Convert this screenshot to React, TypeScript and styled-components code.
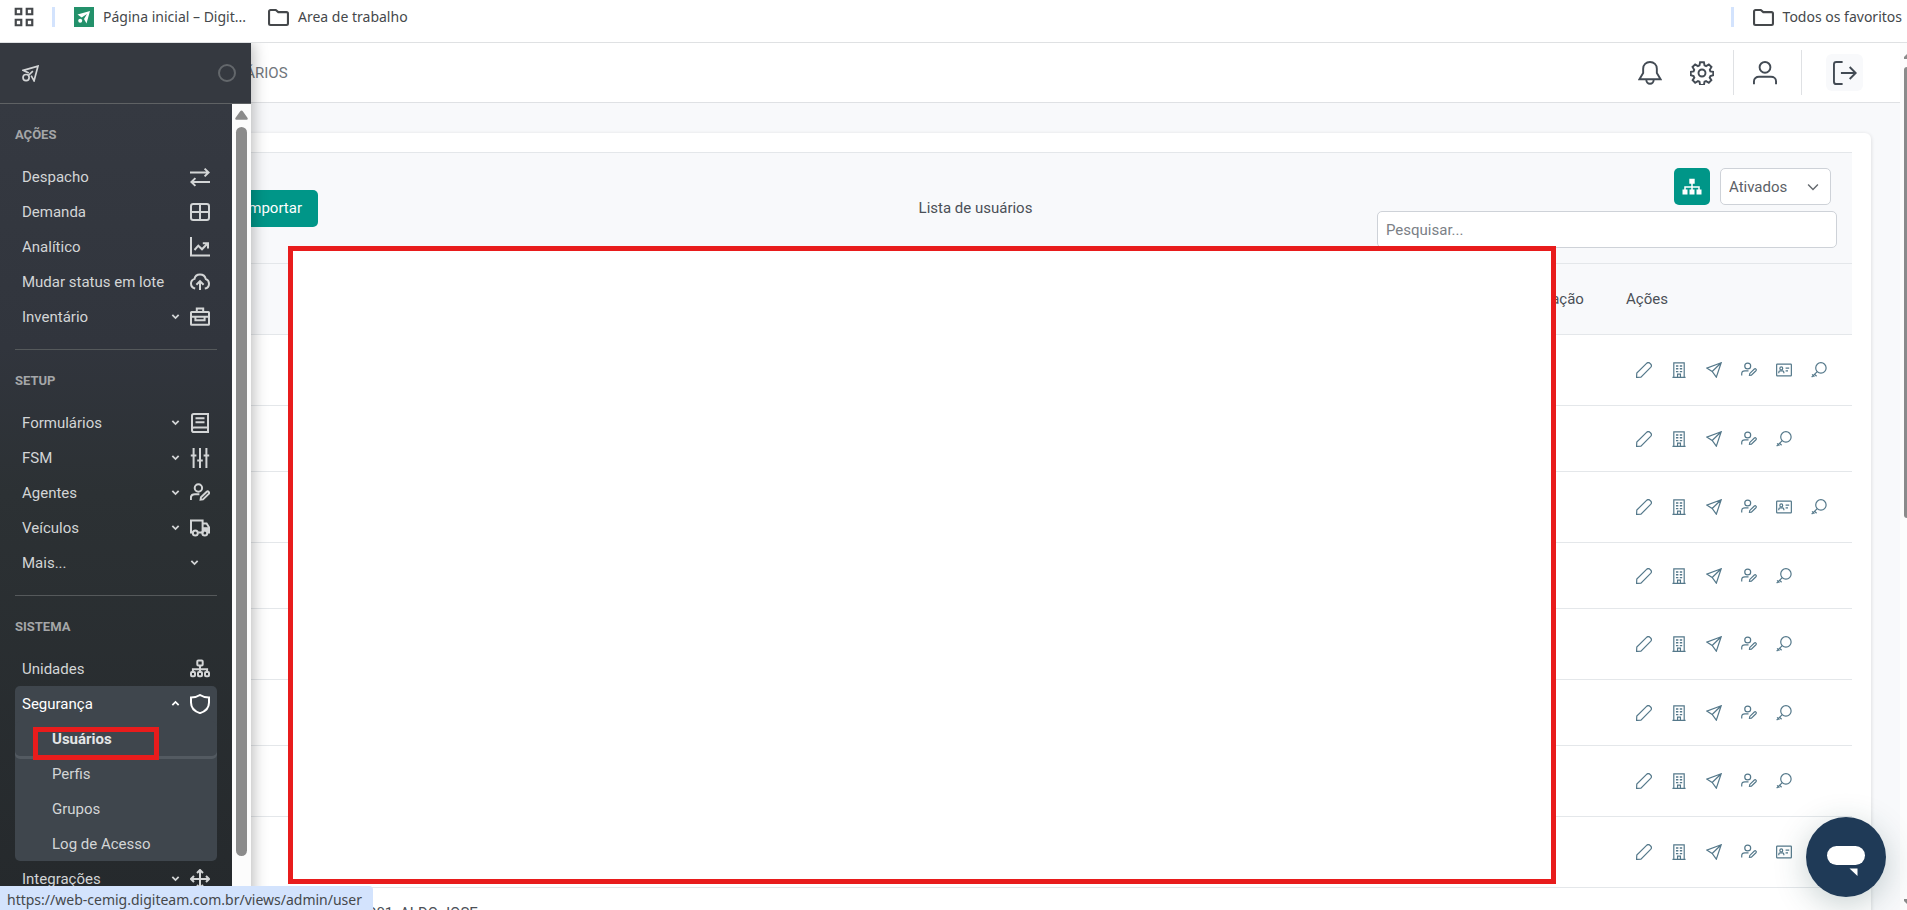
import React from 'react';
import styled, { createGlobalStyle, css } from 'styled-components';

const GlobalStyle = createGlobalStyle`
  *, *::before, *::after { box-sizing: border-box; }
  body {
    margin: 0;
    overflow: hidden;
    background: #fff;
    color: #4b5057;
    font: 15px/22px Roboto, "Liberation Sans", sans-serif;
  }
  button, input, select { font: inherit; color: inherit; }
  button { border: 0; padding: 0; background: none; cursor: pointer; }
  a { color: inherit; text-decoration: none; }
  ul { list-style: none; margin: 0; padding: 0; }
`;

/* ---------- icons ---------- */

const Svg = styled.svg<{ $size: number; $stroke: number }>`
  display: block;
  flex: none;
  width: ${p => p.$size}px;
  height: ${p => p.$size}px;
  fill: none;
  stroke: currentColor;
  stroke-width: ${p => p.$stroke};
`;

const shapes = {
  transfer: <path d="M0 5.500h18.500M14.600 1.600l4 3.900-4 3.900M20 15H1.500M5.400 11.100l-4 3.900 4 3.900" />,
  grid: <><rect x="1" y="2" width="18" height="16" rx="2.200" /><path d="M10 2v16M1 10h18" /></>,
  chart: <path d="M1 0v18.600H20M4.500 13l3.800-4.300 3.700 3.600 5.300-5.500M12.800 6.200h5.200v5.200" />,
  cloud: <path d="M5.200 16.500C2.600 16 1 14.200 1 11.600c0-2.300 1.400-4 3.500-4.700C5 4 7.300 2.400 10 2.400c2.900 0 5.200 1.900 5.800 4.700 2 .7 3.200 2.400 3.200 4.600 0 2.600-1.600 4.400-4.200 4.800M10 18V9.500M6.400 12.700L10 9.100l3.600 3.600" />,
  briefcase: <><rect x="1" y="5" width="18" height="12.800" rx="0.600" /><path d="M6.800 5V1.600h6.400V5M1 9.800h18M5.400 9.800v3.500h9.200V9.800" /></>,
  book: <path d="M18 14.600V1H3.800C2.800 1 2 1.800 2 2.800v14.400c0 1 .8 1.800 1.800 1.800H18v-4.400H3.800C2.800 14.600 2 15.400 2 16.400M5.500 5.200h9M5.500 9.200h9" />,
  equalizer: <path d="M3.600 0v20M10 0v20M16.400 0v20M0.800 7.500h5.600M7.200 12.500h5.600M13.600 7.500h5.600" />,
  userEdit: <><circle cx="8.400" cy="5" r="3.700" /><path d="M0.900 17v-2.200C0.900 12.600 2.700 11.200 4.900 11.200h4.500" /><path d="M10.600 16.700l.4-2.400 5.700-5.500c1.400-1.100 3.200.7 2 2.100l-5.700 5.500z" /></>,
  truck: <><path d="M2.500 14.600H1V2.400h11.600v12.200H8.200M12.600 5.400h4l2.400 3.800v5.400h-1.200" /><path d="M13 9.200h6v4h-6z" fill="currentColor" stroke="none" /><circle cx="5.300" cy="15" r="2.500" /><circle cx="14.800" cy="15" r="2.500" /></>,
  sitemap: <><rect x="7.300" y="1.600" width="5.400" height="5" rx="1" /><rect x="1" y="13" width="4" height="4.200" rx="1" /><rect x="8" y="13" width="4" height="4.200" rx="1" /><rect x="15" y="13" width="4" height="4.200" rx="1" /><path d="M10 6.600V13M2.900 13v-2.800h14.200V13" /></>,
  shield: <path d="M10 1c3 2 5.700 2.600 9 2.600v4.900c0 5.100-3.700 9-9 10.600C4.700 17.500 1 13.600 1 8.500V3.600C4.300 3.600 7 3 10 1z" />,
  move: <path d="M10 1v18M1 10h18M7 4l3-3 3 3M7 16l3 3 3-3M4 7l-3 3 3 3M16 7l3 3-3 3" />,
  pencil: <path d="M.7 19.300l.3-5.500L13.200 1.700c1.300-1.200 3.100-1.200 4.300 0l.8.800c1.200 1.200 1.200 3 0 4.300L6.200 18.900z" />,
  building: <><path d="M3.500 19V1h13v18M1.800 19.300h16.400M8.200 19v-3.800h3.600V19" /><path d="M6.200 5h3M11 5h3M6.200 8.500h3M11 8.500h3M6.200 12h3M11 12h3" strokeWidth="1.800" /></>,
  plane: <path d="M19 .9L.9 7.600l6.800 4.300L12.900 19zM19 .9L7.700 11.900" />,
  badge: <><rect x="0.800" y="2.600" width="18.400" height="14.800" rx="0.800" /><circle cx="6.600" cy="8" r="1.800" /><path d="M3.500 14v-1.200c0-1 .8-1.700 1.700-1.700H8c1 0 1.800.7 1.800 1.700V14M12 7.600h4.500M12 11h3" /></>,
  key: <><circle cx="12.400" cy="7.400" r="6.500" /><path d="M7.800 12L.8 19M1.400 15.400l2.900 2.900M4.400 15.200l2.600 2.600" /></>,
  bell: <path d="M10 .8c3.300 0 5.700 2.400 5.700 5.600v3.500l3.100 5.300H1.200l3.100-5.300V6.400C4.300 3.200 6.700.8 10 .8zM6.900 15.500c0 2 1.300 3.500 3.100 3.500s3.100-1.500 3.100-3.500" />,
  gear: <><circle cx="10" cy="10" r="2.900" /><path d="M8.400 1h3.200l.5 2.600 1.300.6 2.300-1.400 2.200 2.200-1.400 2.300.5 1.300 2.400.5v2.800l-2.400.6-.6 1.300 1.400 2.200-2.100 2.100-2.300-1.300-1.300.5-.5 2.600H8.400l-.5-2.600-1.300-.5-2.300 1.300-2.100-2.100 1.400-2.200-.6-1.300L.6 11.900V9.100L3 8.600l.5-1.300-1.400-2.300 2.200-2.200 2.300 1.400 1.300-.6z" /></>,
  user: <><circle cx="10" cy="5.300" r="4.500" /><path d="M.8 19.400v-2.600c0-2.300 1.900-3.700 4.200-3.700h10c2.300 0 4.200 1.400 4.200 3.700v2.600" /></>,
  logout: <path d="M8 .8H2.800c-1.100 0-2 .9-2 2v14.400c0 1.100.9 2 2 2H8M6.600 10h12.200M13.900 5l5 5-5 5" />,
  folder: <path d="M1 4.300v11.400c0 .8.600 1.400 1.400 1.400h15.200c.8 0 1.400-.6 1.400-1.400V6.300c0-.8-.6-1.400-1.400-1.400H9.800L7.400 2.900h-5C1.600 2.900 1 3.500 1 4.300z" />,
  apps: <path d="M2.500 2.500h5v5h-5zM12.500 2.500h5v5h-5zM2.500 12.500h5v5h-5zM12.500 12.500h5v5h-5z" />,
  down: <path d="M3 6.500l7 7 7-7" />,
  up: <path d="M3 13.500l7-7 7 7" />,
  logo: <><path d="M8 9.500L1.400 6.300 18.800 1.300 14.200 18.600 10.800 12.500" /><circle cx="4.800" cy="14.800" r="3.600" /><path d="M12.800 7.300l-5 4.700" /></>,
};
type IconName = keyof typeof shapes;

const Icon = ({ name, size = 20, stroke = 2 }: { name: IconName; size?: number; stroke?: number }) => (
  <Svg $size={size} $stroke={stroke} viewBox="0 0 20 20" aria-hidden="true">{shapes[name]}</Svg>
);

/* ---------- browser chrome ---------- */

const Page = styled.div`
  display: flex;
  flex-direction: column;
  height: 100vh;
`;

const BookmarkBar = styled.nav`
  display: flex;
  align-items: flex-start;
  flex: none;
  height: 43px;
  padding: 3px 5px 0 13px;
  border-bottom: 1px solid #dfe1e3;
  color: #45484b;
  font: 14px/28px "Noto Sans", sans-serif;
`;

const Bookmark = styled.a<{ $gap?: number }>`
  display: flex;
  align-items: center;
  height: 28px;
  gap: 9px;
  margin-right: ${p => p.$gap ?? 0}px;
`;

const BarDivider = styled.span<{ $push?: boolean }>`
  width: 3px;
  height: 20px;
  margin: 4px 19px 0 17px;
  background: #d3e3fd;
  ${p => p.$push && css`margin-left: auto;`}
`;

const StatusBubble = styled.div`
  position: fixed;
  left: 0;
  bottom: 0;
  z-index: 30;
  height: 24px;
  padding: 0 11px 0 7px;
  border-top-right-radius: 4px;
  background: #d3e3fd;
  color: #45484b;
  font: 14px/28px "Noto Sans", sans-serif;
`;

/* ---------- application shell ---------- */

const Shell = styled.div`
  position: relative;
  display: flex;
  flex: 1;
  min-height: 0;
  overflow: hidden;
`;

const Main = styled.main`
  flex: 1;
  min-width: 0;
  overflow: hidden;
  background: #f8f9fb;
`;

const PageScroll = styled.div`
  display: flex;
  flex-direction: column;
  align-items: flex-end;
  width: 7px;
  padding: 11px 0 6px;
  overflow: hidden;
  background: #fcfcfc;
`;

const PageThumb = styled.span`
  width: 3px;
  height: 53%;
  margin: 8px 0 auto;
  border-radius: 5px 0 0 5px;
  background: #8b8b8b;
`;

const Arrow = styled.svg<{ $w: number; $h: number }>`
  display: block;
  flex: none;
  width: ${p => p.$w}px;
  height: ${p => p.$h}px;
  fill: #8b8b8b;
`;

const TopBar = styled.header`
  display: flex;
  align-items: center;
  height: 60px;
  padding: 0 37px 0 217px;
  border-bottom: 1px solid #dfe1e4;
  background: #fff;
  color: #6f757b;
`;

const TopActions = styled.div`
  display: flex;
  align-items: center;
  margin-left: auto;
  color: #434b54;
`;

const TopButton = styled.button<{ $gap?: number; $boxed?: boolean }>`
  display: grid;
  place-items: center;
  width: ${p => (p.$boxed ? 37 : 24)}px;
  height: 37px;
  margin-right: ${p => p.$gap ?? 0}px;
  border-radius: 6px;
  background: ${p => (p.$boxed ? '#f8f9fb' : 'transparent')};
`;

const TopDivider = styled.span<{ $gap: number }>`
  width: 1px;
  height: 45px;
  margin: 0 ${p => p.$gap}px;
  background: #dfe1e4;
`;

/* ---------- sidebar ---------- */

const Sidebar = styled.aside`
  position: absolute;
  inset: 0 auto 0 0;
  z-index: 10;
  display: flex;
  flex-direction: column;
  width: 251px;
  background: linear-gradient(#363a42, #31353d 35%, #2c3134 52%, #25292c);
  box-shadow: 2px 0 14px rgba(0, 0, 0, 0.28);
  color: #d3d5d6;
`;

const SideHeader = styled.div`
  display: flex;
  align-items: center;
  justify-content: space-between;
  flex: none;
  height: 61px;
  padding: 0 15px 0 22px;
  border-bottom: 1px solid #5f6264;
  background: #353940;
`;

const PinToggle = styled.button`
  width: 18px;
  height: 18px;
  border: 2px solid #63676b;
  border-radius: 50%;
`;

const SideBody = styled.div`
  display: flex;
  flex: 1;
  min-height: 0;
  overflow: hidden;
`;

const SideNav = styled.nav`
  flex: 1;
  padding: 0 15px;
`;

const SideScroll = styled.div`
  display: flex;
  flex-direction: column;
  align-items: center;
  width: 19px;
  padding: 6px 0 54px;
  background: #fcfcfc;
`;

const SideThumb = styled.span`
  flex: 1;
  width: 11px;
  margin-top: 7px;
  border-radius: 6px;
  background: #8b8b8b;
`;

const Section = styled.section`
  padding-bottom: 15px;
  & + & { border-top: 1px solid #55595b; }
`;

const SectionTitle = styled.h2`
  margin: 0;
  padding: 20px 0 13px;
  color: #a4a6a8;
  font-size: 13px;
  font-weight: 700;
  line-height: 22px;
`;

const itemStyle = css`
  display: flex;
  align-items: center;
  gap: 10px;
  width: 100%;
  height: 35px;
  padding: 0 7px;
  text-align: left;
`;
const ItemLink = styled.a`${itemStyle}`;
const ItemButton = styled.button<{ $open?: boolean }>`
  ${itemStyle}
  padding: 0 7px;
  color: ${p => (p.$open ? '#fff' : 'inherit')};
`;
const ItemLabel = styled.span`flex: 1;`;

const OpenGroup = styled.li`
  border-radius: 5px;
  background: #3f464d;
`;

const SubLink = styled.a<{ $active?: boolean }>`
  display: flex;
  align-items: center;
  height: 35px;
  padding-left: 37px;
  ${p => p.$active && css`
    border-radius: 5px;
    box-shadow: 0 3px 0 #535a61;
    background: #3f464d;
    color: #e4e5e6;
    font-weight: 700;
  `}
`;

type Item = { label: string; icon?: IconName; expands?: boolean; children?: string[] };
const sections: { title: string; items: Item[] }[] = [
  {
    title: 'AÇÕES',
    items: [
      { label: 'Despacho', icon: 'transfer' },
      { label: 'Demanda', icon: 'grid' },
      { label: 'Analítico', icon: 'chart' },
      { label: 'Mudar status em lote', icon: 'cloud' },
      { label: 'Inventário', icon: 'briefcase', expands: true },
    ],
  },
  {
    title: 'SETUP',
    items: [
      { label: 'Formulários', icon: 'book', expands: true },
      { label: 'FSM', icon: 'equalizer', expands: true },
      { label: 'Agentes', icon: 'userEdit', expands: true },
      { label: 'Veículos', icon: 'truck', expands: true },
      { label: 'Mais...', expands: true },
    ],
  },
  {
    title: 'SISTEMA',
    items: [
      { label: 'Unidades', icon: 'sitemap' },
      { label: 'Segurança', icon: 'shield', expands: true, children: ['Usuários', 'Perfis', 'Grupos', 'Log de Acesso'] },
      { label: 'Integrações', icon: 'move', expands: true },
    ],
  },
];

const Chevron = styled.span`
  &:last-child { padding-right: 11px; }
`;

const SideItem = ({ item }: { item: Item }) => {
  const inner = (
    <>
      <ItemLabel>{item.label}</ItemLabel>
      {item.expands && <Chevron><Icon name={item.children ? 'up' : 'down'} size={9} stroke={4} /></Chevron>}
      {item.icon && <Icon name={item.icon} />}
    </>
  );
  if (item.children) {
    return (
      <OpenGroup>
        <ItemButton type="button" aria-expanded="true" $open>{inner}</ItemButton>
        <ul>
          {item.children.map((c, i) => <li key={c}><SubLink href="#" $active={i === 0}>{c}</SubLink></li>)}
        </ul>
      </OpenGroup>
    );
  }
  return <li>{item.expands ? <ItemButton type="button" aria-expanded="false">{inner}</ItemButton> : <ItemLink href="#">{inner}</ItemLink>}</li>;
};

/* ---------- content ---------- */

const Card = styled.section`
  margin: 30px 29px 0 79px;
  padding: 19px;
  border-radius: 6px;
  background: #fff;
  box-shadow: 0 1px 4px rgba(0, 0, 0, 0.14);
`;

const Toolbar = styled.div`
  display: grid;
  grid-template-columns: 1fr auto 1fr;
  align-items: center;
  padding: 15px 15px 15px 16px;
  border: 1px solid #e4e7ea;
  border-width: 1px 0;
  background: #f8f9fb;
`;

const ButtonRow = styled.div`
  display: flex;
  justify-content: flex-end;
  gap: 8px;
  width: 204px;
`;

const PrimaryButton = styled.button<{ $square?: boolean }>`
  display: grid;
  place-items: center;
  height: 37px;
  padding: 0 ${p => (p.$square ? 8 : 16)}px;
  border-radius: 5px;
  background: #009688;
  color: #fff;
`;

const Filters = styled.div`
  display: flex;
  flex-direction: column;
  gap: 6px;
  justify-self: end;
  width: 460px;
`;

const FilterRow = styled.div`
  display: flex;
  justify-content: flex-end;
  gap: 10px;
  padding-right: 6px;
`;

const SelectBox = styled.span`
  position: relative;
  svg { position: absolute; right: 11px; top: 12px; pointer-events: none; color: #63686d; }
`;

const Select = styled.select`
  display: block;
  width: 111px;
  height: 37px;
  padding: 0 8px;
  appearance: none;
  border: 1px solid #ced2d8;
  border-radius: 5px;
  background: #fff;
  color: #5c6167;
`;

const SearchInput = styled.input`
  height: 37px;
  padding: 0 8px;
  border: 1px solid #ced2d8;
  border-radius: 5px;
  background: #fff;
  &::placeholder { color: #7b8086; opacity: 1; }
`;

const Table = styled.table`
  width: 100%;
  table-layout: fixed;
  border-collapse: separate;
  border-spacing: 0;
`;

const Col = styled.col<{ $w?: number }>`
  width: ${p => (p.$w ? p.$w + 'px' : 'auto')};
`;

const Th = styled.th`
  height: 71px;
  padding: 0 16px;
  border-bottom: 1px solid #e4e7ea;
  background: #f8f9fb;
  font-weight: 400;
  text-align: left;
  white-space: nowrap;
`;

const Td = styled.td<{ $tall?: boolean }>`
  height: ${p => (p.$tall ? 71 : 66)}px;
  padding: 0 16px;
  border-bottom: 1px solid #e4e7ea;
`;

const NameTd = styled(Td)`
  padding-top: 14px;
  vertical-align: top;
`;

const RowActions = styled.div`
  display: flex;
  gap: 19px;
  padding-left: 10px;
`;

const RowButton = styled.button`
  flex: none;
  width: 16px;
  height: 16px;
  color: #54788a;
`;

const rows: { badge: boolean; tall: boolean; name?: string }[] = [
  { badge: true, tall: true },
  { badge: false, tall: false },
  { badge: true, tall: true },
  { badge: false, tall: false },
  { badge: false, tall: true },
  { badge: false, tall: false },
  { badge: false, tall: true },
  { badge: true, tall: true },
  { badge: true, tall: true, name: '901_ALDO JOSE' },
];

const actionLabels: [IconName, string][] = [
  ['pencil', 'Editar'],
  ['building', 'Unidades'],
  ['plane', 'Enviar'],
  ['userEdit', 'Editar agente'],
  ['badge', 'Credencial'],
  ['key', 'Senha'],
];

/* ---------- overlays ---------- */

const Highlight = styled.div<{ $fill?: boolean }>`
  position: absolute;
  z-index: 20;
  border: 5px solid #e81c1c;
  pointer-events: none;
  ${p => (p.$fill
    ? css`top: 246px; left: 288px; right: 351px; height: 638px; background: #fff;`
    : css`top: 727px; left: 33px; width: 126px; height: 33px;`)}
`;

const ChatButton = styled.button`
  position: fixed;
  right: 21px;
  bottom: 13px;
  z-index: 20;
  width: 80px;
  height: 80px;
  border-radius: 50%;
  background: #1f3a57;
  box-shadow: 0 8px 32px rgba(30, 70, 70, 0.25);
`;

const ChatGlyph = styled.svg`
  display: block;
  width: 80px;
  height: 80px;
  fill: #fff;
`;

const Favicon = () => (
  <Svg $size={20} $stroke={0} viewBox="0 0 20 20" aria-hidden="true">
    <rect width="20" height="20" fill="#23916b" />
    <path d="M3.500 7.500L16 4l-3.500 12.500-2.500-4.500L13 7l-5.300 3.500z" fill="#fff" />
    <circle cx="6.200" cy="13.800" r="2" fill="#fff" />
  </Svg>
);

export default function App() {
  return (
    <>
      <GlobalStyle />
      <Page>
        <BookmarkBar aria-label="Favoritos">
          <Bookmark href="#" aria-label="Aplicativos"><Icon name="apps" size={22} /></Bookmark>
          <BarDivider />
          <Bookmark href="#" $gap={22}><Favicon />Página inicial – Digit...</Bookmark>
          <Bookmark href="#"><Icon name="folder" size={21} />Area de trabalho</Bookmark>
          <BarDivider $push />
          <Bookmark href="#"><Icon name="folder" size={21} />Todos os favoritos</Bookmark>
        </BookmarkBar>

        <Shell>
          <Sidebar>
            <SideHeader>
              <Icon name="logo" size={17} />
              <PinToggle type="button" aria-label="Fixar menu" />
            </SideHeader>
            <SideBody>
              <SideNav>
                {sections.map(s => (
                  <Section key={s.title}>
                    <SectionTitle>{s.title}</SectionTitle>
                    <ul>{s.items.map(i => <SideItem key={i.label} item={i} />)}</ul>
                  </Section>
                ))}
              </SideNav>
              <SideScroll aria-hidden="true">
                <Arrow $w={13} $h={10} viewBox="0 0 13 10"><path d="M6.500 0.500q.8 0 1.300.8L12.600 8q.6 1.700-1 1.800H1.400Q-.2 9.700.4 8l4.800-6.700q.5-.8 1.300-.8z" /></Arrow>
                <SideThumb />
              </SideScroll>
            </SideBody>
          </Sidebar>

          <Main>
            <TopBar>
              <span>USUÁRIOS</span>
              <TopActions>
                <TopButton type="button" aria-label="Notificações" $gap={28}><Icon name="bell" size={24} stroke={1.600} /></TopButton>
                <TopButton type="button" aria-label="Configurações"><Icon name="gear" size={24} stroke={1.600} /></TopButton>
                <TopDivider $gap={19} />
                <TopButton type="button" aria-label="Perfil"><Icon name="user" size={24} stroke={1.600} /></TopButton>
                <TopDivider $gap={24} />
                <TopButton type="button" aria-label="Sair" $boxed><Icon name="logout" size={24} stroke={1.600} /></TopButton>
              </TopActions>
            </TopBar>

            <Card>
              <Toolbar>
                <ButtonRow>
                  <PrimaryButton type="button">Novo</PrimaryButton>
                  <PrimaryButton type="button">Importar</PrimaryButton>
                </ButtonRow>
                <span>Lista de usuários</span>
                <Filters>
                  <FilterRow>
                    <PrimaryButton type="button" aria-label="Unidades" $square>
                      <Svg $size={20} $stroke={1.5} viewBox="0 0 20 20" aria-hidden="true">
                        <path d="M10 6v7M3 13v-3h14v3" />
                        <path d="M7.300 1.800h5.400v5H7.300zM.5 12.500h5v5h-5zM7.500 12.500h5v5h-5zM14.500 12.500h5v5h-5z" fill="currentColor" stroke="none" />
                      </Svg>
                    </PrimaryButton>
                    <SelectBox>
                      <Select aria-label="Situação" defaultValue="Ativados">
                        <option>Ativados</option>
                        <option>Desativados</option>
                      </Select>
                      <Icon name="down" size={14} />
                    </SelectBox>
                  </FilterRow>
                  <SearchInput type="text" aria-label="Pesquisar" placeholder="Pesquisar..." />
                </Filters>
              </Toolbar>

              <Table>
                <colgroup><Col $w={254} /><Col /><Col $w={166} /><Col $w={242} /></colgroup>
                <thead>
                  <tr><Th /><Th>Nome</Th><Th>Última atualização</Th><Th>Ações</Th></tr>
                </thead>
                <tbody>
                  {rows.map((r, i) => (
                    <tr key={i}>
                      <Td $tall={r.tall} />
                      <NameTd $tall={r.tall}>{r.name}</NameTd>
                      <Td $tall={r.tall} />
                      <Td $tall={r.tall}>
                        <RowActions>
                          {actionLabels.filter(([n]) => n !== 'badge' || r.badge).map(([n, label]) => (
                            <RowButton key={n} type="button" aria-label={label}><Icon name={n} size={16} stroke={1.500} /></RowButton>
                          ))}
                        </RowActions>
                      </Td>
                    </tr>
                  ))}
                </tbody>
              </Table>
            </Card>
          </Main>

          <PageScroll aria-hidden="true">
            <Arrow $w={3} $h={5} viewBox="0 0 3 5"><path d="M3 0v5H0V3z" /></Arrow>
            <PageThumb />
            <Arrow $w={3} $h={5} viewBox="0 0 3 5"><path d="M3 5V0H0v2z" /></Arrow>
          </PageScroll>
        </Shell>
      </Page>

      <Highlight $fill />
      <Highlight />
      <ChatButton type="button" aria-label="Abrir chat">
        <ChatGlyph viewBox="0 0 80 80" aria-hidden="true"><rect x="21" y="29" width="38" height="19" rx="9.500" /><path d="M43.500 51.500h8v7.500z" /></ChatGlyph>
      </ChatButton>
      <StatusBubble>https://web-cemig.digiteam.com.br/views/admin/user</StatusBubble>
    </>
  );
}
